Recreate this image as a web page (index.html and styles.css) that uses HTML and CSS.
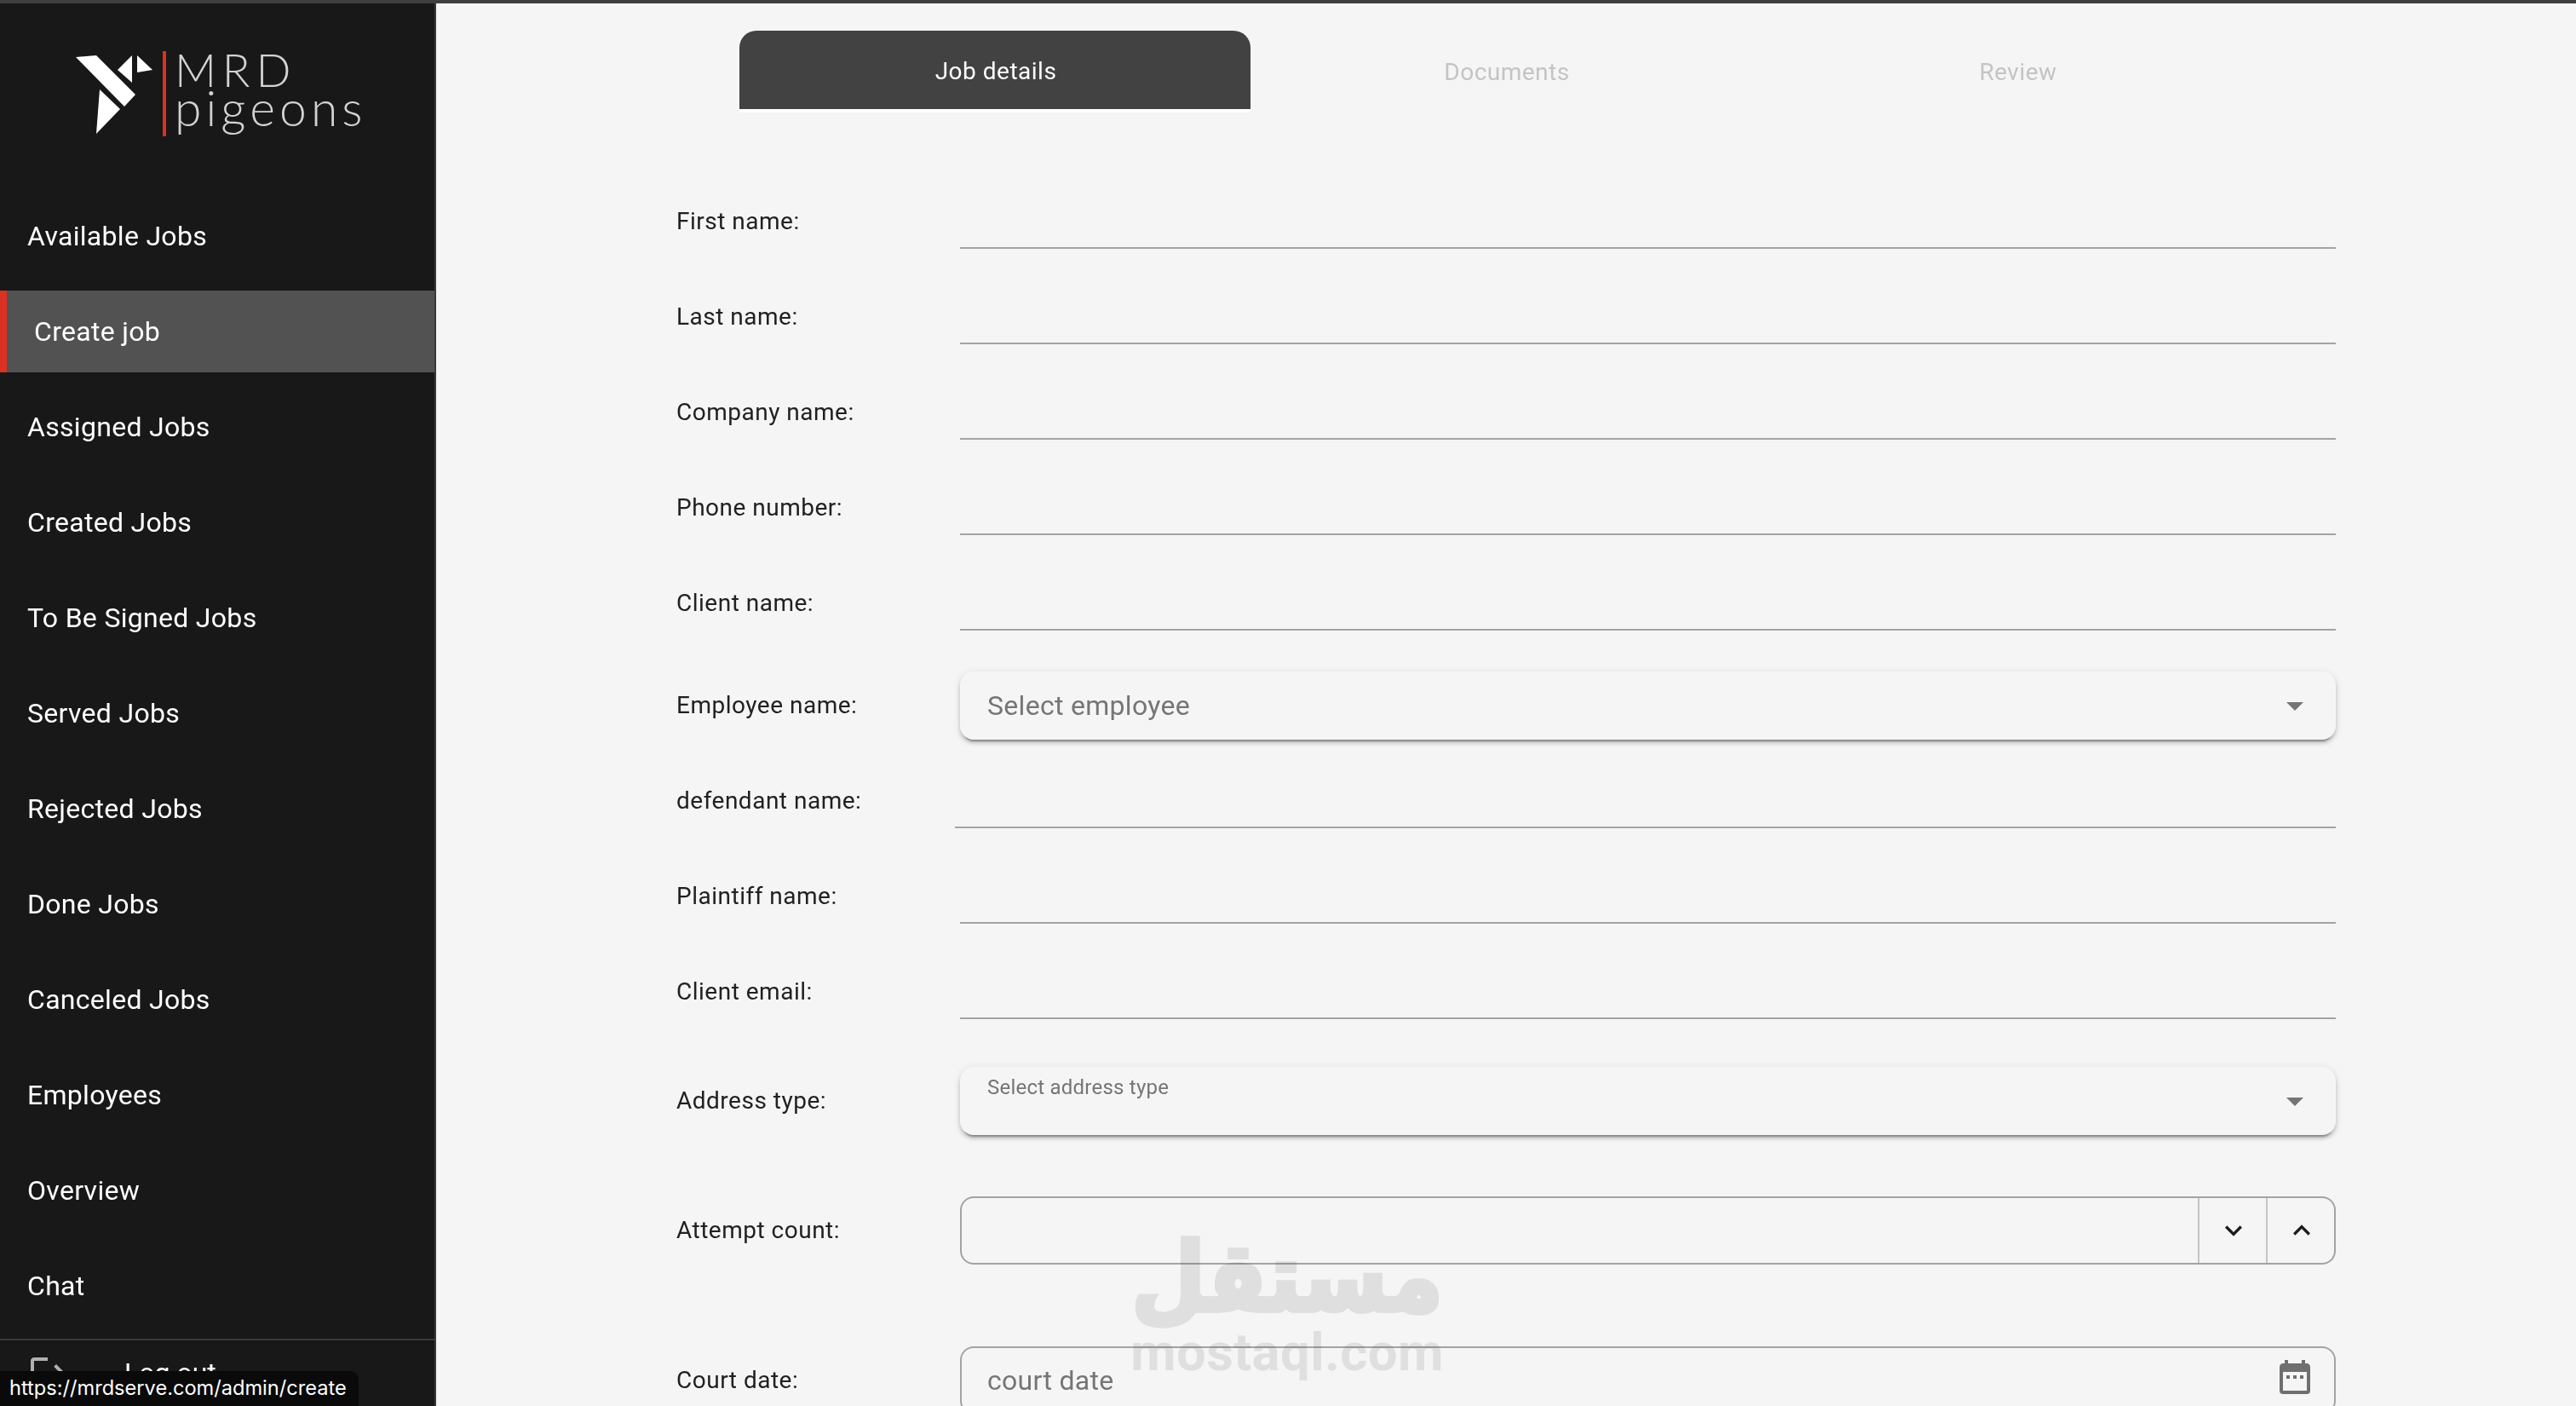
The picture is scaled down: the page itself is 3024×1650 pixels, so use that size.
FILE: index.html
```html
<!DOCTYPE html>
<html lang="en">
<head>
<meta charset="utf-8">
<title>MRD pigeons - Create job</title>
<link rel="stylesheet" href="styles.css">
</head>
<body>
<div class="strip"></div>
<div class="app">
  <aside class="sidebar">
    <div class="logo">
      <svg class="bird" viewBox="0 0 92 94" aria-hidden="true">
        <polygon points="1,3 25,1 71,47 58,61"/>
        <polygon points="29,41 53,64 25,93"/>
        <polygon points="67,1 67,33 50,18"/>
        <polygon points="73,1 91,18 73,21"/>
      </svg>
      <div class="logo-bar"></div>
      <div class="logo-text">
        <div class="logo-mrd">MRD</div>
        <div class="logo-pigeons">pigeons</div>
      </div>
    </div>
    <nav class="menu">
      <a class="menu-item">Available Jobs</a>
      <a class="menu-item active">Create job</a>
      <a class="menu-item">Assigned Jobs</a>
      <a class="menu-item">Created Jobs</a>
      <a class="menu-item">To Be Signed Jobs</a>
      <a class="menu-item">Served Jobs</a>
      <a class="menu-item">Rejected Jobs</a>
      <a class="menu-item">Done Jobs</a>
      <a class="menu-item">Canceled Jobs</a>
      <a class="menu-item">Employees</a>
      <a class="menu-item">Overview</a>
      <a class="menu-item">Chat</a>
    </nav>
    <div class="logout">
      <svg class="logout-icon" viewBox="0 0 24 24" aria-hidden="true"><path d="M17 7L15.59 8.41L18.17 11H8V13H18.17L15.59 15.58L17 17L22 12M4 5H12V3H4C2.9 3 2 3.9 2 5V19C2 20.1 2.9 21 4 21H12V19H4V5Z"/></svg>
      <span>Log out</span>
    </div>
  </aside>
  <main class="main">
    <div class="tabs">
      <div class="tab current">Job details</div>
      <div class="tab">Documents</div>
      <div class="tab">Review</div>
    </div>
    <form class="form">
      <div class="row"><label class="label">First name:</label><div class="line"></div></div>
      <div class="row"><label class="label">Last name:</label><div class="line"></div></div>
      <div class="row"><label class="label">Company name:</label><div class="line"></div></div>
      <div class="row"><label class="label">Phone number:</label><div class="line"></div></div>
      <div class="row"><label class="label">Client name:</label><div class="line"></div></div>
      <div class="row"><label class="label">Employee name:</label>
        <div class="select"><span class="placeholder">Select employee</span>
          <svg class="arrow" viewBox="0 0 24 24" aria-hidden="true"><path d="M7,10L12,15L17,10H7Z"/></svg>
        </div>
      </div>
      <div class="row row-tight"><label class="label label-narrow">defendant name:</label><div class="line"></div></div>
      <div class="row"><label class="label">Plaintiff name:</label><div class="line"></div></div>
      <div class="row"><label class="label">Client email:</label><div class="line"></div></div>
      <div class="row row-address"><label class="label">Address type:</label>
        <div class="select select-floated"><span class="floated">Select address type</span>
          <svg class="arrow" viewBox="0 0 24 24" aria-hidden="true"><path d="M7,10L12,15L17,10H7Z"/></svg>
        </div>
      </div>
      <div class="row row-attempt"><label class="label">Attempt count:</label>
        <div class="outlined">
          <div class="outlined-input"></div>
          <div class="stepper"><svg class="chevron" viewBox="0 0 24 24" aria-hidden="true"><path d="M7.41,8.58L12,13.17L16.59,8.58L18,10L12,16L6,10L7.41,8.58Z"/></svg></div>
          <div class="stepper"><svg class="chevron" viewBox="0 0 24 24" aria-hidden="true"><path d="M7.41,15.41L12,10.83L16.59,15.41L18,14L12,8L6,14L7.41,15.41Z"/></svg></div>
        </div>
      </div>
      <div class="row row-court"><label class="label">Court date:</label>
        <div class="outlined outlined-date">
          <span class="placeholder">court date</span>
          <svg class="calendar" viewBox="0 0 24 24" aria-hidden="true"><path d="M19,19H5V8H19M16,1V3H8V1H6V3H5C3.89,3 3,3.89 3,5V19A2,2 0 0,0 5,21H19A2,2 0 0,0 21,19V5C21,3.89 20.1,3 19,3H18V1M7,10H9V12H7M11,10H13V12H11M15,10H17V12H15Z"/></svg>
        </div>
      </div>
    </form>
  </main>
</div>
<div class="watermark">
  <div class="wm-ar" lang="ar" dir="rtl">مستقل</div>
  <div class="wm-en">mostaql.com</div>
</div>
<div class="status-tip">https://mrdserve.com/admin/create</div>
</body>
</html>
```
FILE: styles.css
```css
* { box-sizing: border-box; }
html, body { margin: 0; height: 1650px; overflow: hidden; }
body {
  display: flex;
  flex-direction: column;
  background: #f5f5f5;
  font-family: Roboto, "Liberation Sans", sans-serif;
  color: #212121;
  position: relative;
}
.strip { height: 4px; flex: none; background: #3f3f3f; }
.app { flex: 1; display: flex; min-height: 0; }

/* Sidebar */
.sidebar {
  width: 512px;
  flex: none;
  background: #181818;
  border-right: 2px solid #3a3a3a;
  display: flex;
  flex-direction: column;
  overflow: hidden;
}
.logo {
  height: 225px;
  flex: none;
  display: flex;
  align-items: flex-start;
  padding: 56px 0 0 88px;
}
.bird { width: 92px; height: 94px; fill: #fff; margin-top: 4px; flex: none; }
.logo-bar { width: 4px; height: 100px; background: #dc3022; margin-left: 11px; flex: none; }
.logo-text { margin-left: 10px; font-family: Lato, sans-serif; font-weight: 300; color: #d2d2d2; margin-top: -3px; }
.logo-mrd { font-size: 54px; line-height: 50px; letter-spacing: 6.8px; }
.logo-pigeons { font-size: 57px; line-height: 50px; letter-spacing: 5.1px; margin-top: -6px; }
.menu { display: flex; flex-direction: column; gap: 16px; flex: none; }
.menu-item {
  height: 96px;
  display: flex;
  align-items: center;
  padding-left: 32px;
  font-size: 32px;
  letter-spacing: 0.3px;
  color: #fff;
}
.menu-item.active { background: #525252; border-left: 8px solid #dc3022; }
.logout {
  margin-top: 14px;
  border-top: 2px solid #3a3a3a;
  padding: 14px 0 0 32px;
  display: flex;
  align-items: center;
  gap: 66px;
  font-size: 32px;
  color: #fff;
}
.logout-icon { width: 48px; height: 48px; fill: #b0b0b0; flex: none; }

/* Main */
.main { flex: 1; min-width: 0; display: flex; flex-direction: column; align-items: center; overflow: hidden; }
.tabs { display: flex; margin-top: 32px; flex: none; }
.tab {
  width: 600px;
  height: 96px;
  display: flex;
  align-items: center;
  justify-content: center;
  padding-left: 2px;
  font-size: 28px;
  letter-spacing: 0.5px;
  color: #c4c4c4;
}
.tab.current { background: #424242; color: #fff; border-radius: 20px 20px 0 0; height: 92px; margin-bottom: 4px; padding-top: 3px; box-shadow: 0 4px 0 #fff; }
.form { width: 1948px; display: flex; flex-direction: column; gap: 48px; margin-top: 96px; flex: none; }
.row { display: flex; align-items: center; flex: none; }
.row-tight { margin-top: -8px; }
.row-address { margin-top: 8px; }
.row-attempt { margin-top: 24px; }
.row-court { margin-top: 48px; }
.label { width: 333px; flex: none; font-size: 28px; letter-spacing: 0.5px; color: #212121; position: relative; top: -1px; }
.label-narrow { width: 327px; }
.line { flex: 1; height: 64px; border-bottom: 2px solid #a3a3a3; }
.select {
  flex: 1;
  height: 80px;
  border-radius: 16px;
  background: #f5f5f5;
  box-shadow: 0 6px 2px -4px rgba(0,0,0,.3), 0 4px 4px 0 rgba(0,0,0,.16), 0 2px 10px 0 rgba(0,0,0,.12);
  display: flex;
  align-items: center;
  justify-content: space-between;
  padding: 0 24px 0 32px;
  position: relative;
}
.select-floated { align-items: flex-start; }
.placeholder { font-size: 32px; letter-spacing: 0.3px; color: #757575; }
.floated { font-size: 24px; letter-spacing: 0.23px; color: #757575; margin-top: 10px; }
.arrow { width: 48px; height: 48px; fill: #757575; flex: none; }
.select-floated .arrow { margin-top: 16px; }
.outlined {
  flex: 1;
  height: 80px;
  border: 2px solid #a3a3a3;
  border-radius: 16px;
  display: flex;
  align-items: center;
}
.outlined-input { flex: 1; }
.stepper {
  width: 80px;
  height: 100%;
  border-left: 2px solid #c4c4c4;
  padding-left: 2px;
  display: flex;
  align-items: center;
  justify-content: center;
}
.chevron { width: 40px; height: 40px; fill: #1c1c1c; }
.outlined-date { justify-content: space-between; padding: 0 22px 0 30px; }
.calendar { width: 48px; height: 48px; fill: #6f6f6f; flex: none; margin-top: -4px; }

/* Overlays */
.watermark {
  position: absolute;
  left: 1330px;
  top: 1440px;
  width: 362px;
  color: #e9e9e9;
  mix-blend-mode: multiply;
  pointer-events: none;
  font-weight: 700;
  display: flex;
  flex-direction: column;
  align-items: center;
}
.wm-ar {
  font-family: "DejaVu Sans", sans-serif;
  font-size: 100px;
  line-height: 120px;
  height: 120px;
  white-space: nowrap;
  -webkit-text-stroke: 5px #e9e9e9;
  transform: scaleY(1.12);
}
.wm-en { font-family: Roboto, sans-serif; font-size: 61.5px; line-height: 62px; white-space: nowrap; letter-spacing: 0.5px; margin-top: -4px; }
.status-tip {
  position: absolute;
  left: 0;
  bottom: 0;
  width: 421px;
  height: 41px;
  background: #0a0a0a;
  border-radius: 0 10px 0 0;
  color: #fff;
  font-family: Inter, "Liberation Sans", sans-serif;
  font-size: 23.6px;
  line-height: 40px;
  padding-left: 11px;
  white-space: nowrap;
}
```
